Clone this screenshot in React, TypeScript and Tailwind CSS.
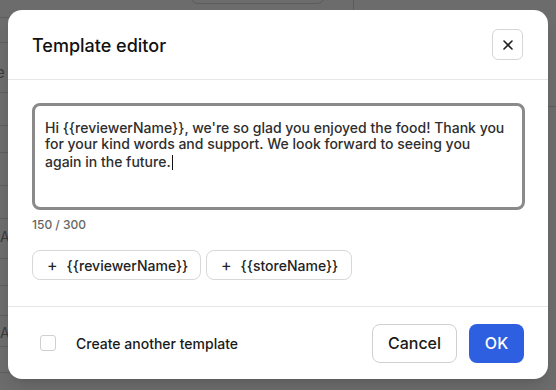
import React from "react";

export default function App() {
  const rows = [17, 42, 92, 125, 152, 185, 218, 258, 285, 315, 346, 372];

  return (
    <div
      className="relative h-[390px] w-[556px] overflow-hidden bg-[#6c6c6c]"
      style={{ fontFamily: "Inter, 'Noto Sans', sans-serif" }}
    >
      {/* Dimmed page behind the dialog */}
      <div className="absolute inset-0">
        {rows.map((y) => (
          <div key={y} className="absolute left-0 h-px w-[30px] bg-[#5e5e5e]" style={{ top: y }} />
        ))}
        <div className="absolute left-[-4px] top-[62px] text-[15px] text-[#3a3a3a]">e</div>
        <div className="absolute left-[0px] top-[226px] text-[14px] text-[#3a3a3a]">A</div>
        <div className="absolute left-[0px] top-[322px] text-[14px] text-[#3a3a3a]">A</div>
        <div className="absolute left-[190px] top-[-20px] h-[24px] w-[135px] rounded-lg border border-[#5c5c5c]" />
        <div className="absolute left-[353px] top-0 h-[10px] w-px bg-[#5c5c5c]" />
        <div className="absolute right-0 top-[106px] h-px w-[10px] bg-[#5c5c5c]" />
      </div>

      {/* Dialog */}
      <div className="absolute left-[8px] top-[10px] w-[540px] rounded-[14px] bg-white shadow-lg">
        <div className="flex h-[70px] items-center justify-between border-b border-[#e6e6e6] pl-6 pr-[25px]">
          <h2 className="mt-[2px] text-[18px] font-medium text-[#111]">Template editor</h2>
          <button className="flex h-[31px] w-[31px] items-center justify-center rounded-md border border-[#d6d6d6] text-[#222]">
            <svg width="12" height="12" viewBox="0 0 12 12" fill="none" stroke="currentColor" strokeWidth="1.6" strokeLinecap="round">
              <path d="M2 2l8 8M10 2l-8 8" />
            </svg>
          </button>
        </div>

        <div className="border-b border-[#e6e6e6] px-6 pb-[26px] pt-[23px]">
          <div className="h-[107px] w-[493px] rounded-lg border-[3px] border-[#8a8a8a] pb-2 pl-[10px] pr-[16px] pt-[14px] text-[14px] font-medium leading-[16px] text-[#2e2e2e]">
            Hi {"{{reviewerName}}"}, we're so glad you enjoyed the food! Thank you for your kind words and support. We look forward to seeing you again in the future.
            <span className="ml-px inline-block h-[15px] w-px translate-y-[3px] bg-[#111]" />
          </div>
          <div className="mt-[6px] text-[12px] font-medium text-[#666]">150 / 300</div>
          <div className="mt-[16px] flex gap-[5px]">
            <button className="flex h-[30px] w-[169px] items-center gap-[9px] rounded-lg border border-[#d8d8d8] pl-[14px] text-[14px] font-medium text-[#222]">
              <span className="text-[16px] font-normal">+</span>
              <span>{"{{reviewerName}}"}</span>
            </button>
            <button className="flex h-[30px] w-[146px] items-center gap-[9px] rounded-lg border border-[#d8d8d8] pl-[14px] text-[14px] font-medium text-[#222]">
              <span className="text-[16px] font-normal">+</span>
              <span>{"{{storeName}}"}</span>
            </button>
          </div>
        </div>

        <div className="flex h-[72px] items-center justify-between pl-8 pr-6">
          <label className="flex items-center gap-5">
            <span className="h-[16px] w-[16px] rounded-[3px] border border-[#d0d0d0] bg-white" />
            <span className="text-[14px] font-medium text-[#1a1a1a]">Create another template</span>
          </label>
          <div className="flex gap-3">
            <button className="h-[39px] w-[85px] rounded-lg border border-[#d0d0d0] bg-white text-[16px] font-medium text-[#1a1a1a]">
              Cancel
            </button>
            <button className="h-[39px] w-[55px] rounded-lg bg-[#2d5fe0] text-[16px] font-medium text-white">
              OK
            </button>
          </div>
        </div>
      </div>
    </div>
  );
}
